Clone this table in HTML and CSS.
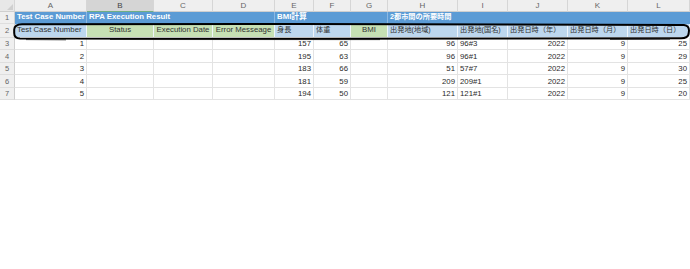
FILE: index.html
```html
<!DOCTYPE html>
<html lang="ja">
<head>
<meta charset="utf-8">
<title>Sheet</title>
<link rel="stylesheet" href="styles.css">
</head>
<body>
<div class="wrap">
  <div class="sheet">
    <!-- column headers -->
    <div class="ch corner"><span class="tri"></span></div>
    <div class="ch">A</div>
    <div class="ch sel">B</div>
    <div class="ch">C</div>
    <div class="ch">D</div>
    <div class="ch">E</div>
    <div class="ch">F</div>
    <div class="ch">G</div>
    <div class="ch">H</div>
    <div class="ch">I</div>
    <div class="ch">J</div>
    <div class="ch">K</div>
    <div class="ch">L</div>

    <!-- row 1 -->
    <div class="rh">1</div>
    <div class="c h1 sepr">Test Case Number</div>
    <div class="c h1 span3 sepr">RPA Execution Result</div>
    <div class="c h1 span3 sepr">BMI計算</div>
    <div class="c h1 span5 jp">2都市間の所要時間</div>

    <!-- row 2 -->
    <div class="rh">2</div>
    <div class="c h2 blue">Test Case Number</div>
    <div class="c h2 green ctr">Status</div>
    <div class="c h2 green ctr">Execution Date</div>
    <div class="c h2 green ctr">Error Messeage</div>
    <div class="c h2 blue jp">身長</div>
    <div class="c h2 blue jp">体重</div>
    <div class="c h2 green ctr">BMI</div>
    <div class="c h2 blue jp">出発地(地域)</div>
    <div class="c h2 blue jp">出発地(国名)</div>
    <div class="c h2 blue jp">出発日時（年）</div>
    <div class="c h2 blue jp">出発日時（月）</div>
    <div class="c h2 blue jp">出発日時（日）</div>

    <!-- row 3 -->
    <div class="rh">3</div>
    <div class="c num">1</div><div class="c"></div><div class="c"></div><div class="c"></div>
    <div class="c num">157</div><div class="c num">65</div><div class="c"></div>
    <div class="c num">96</div><div class="c">96#3</div>
    <div class="c num">2022</div><div class="c num">9</div><div class="c num">25</div>

    <!-- row 4 -->
    <div class="rh">4</div>
    <div class="c num">2</div><div class="c"></div><div class="c"></div><div class="c"></div>
    <div class="c num">195</div><div class="c num">63</div><div class="c"></div>
    <div class="c num">96</div><div class="c">96#1</div>
    <div class="c num">2022</div><div class="c num">9</div><div class="c num">29</div>

    <!-- row 5 -->
    <div class="rh">5</div>
    <div class="c num">3</div><div class="c"></div><div class="c"></div><div class="c"></div>
    <div class="c num">183</div><div class="c num">66</div><div class="c"></div>
    <div class="c num">51</div><div class="c">57#7</div>
    <div class="c num">2022</div><div class="c num">9</div><div class="c num">30</div>

    <!-- row 6 -->
    <div class="rh">6</div>
    <div class="c num">4</div><div class="c"></div><div class="c"></div><div class="c"></div>
    <div class="c num">181</div><div class="c num">59</div><div class="c"></div>
    <div class="c num">209</div><div class="c">209#1</div>
    <div class="c num">2022</div><div class="c num">9</div><div class="c num">25</div>

    <!-- row 7 -->
    <div class="rh">7</div>
    <div class="c num">5</div><div class="c"></div><div class="c"></div><div class="c"></div>
    <div class="c num">194</div><div class="c num">50</div><div class="c"></div>
    <div class="c num">121</div><div class="c">121#1</div>
    <div class="c num">2022</div><div class="c num">9</div><div class="c num">20</div>
  </div>

  <svg class="mark" width="690" height="50" viewBox="0 0 690 50" aria-hidden="true">
    <path d="M22,24.2 L300,24 L684,25 Q689,25.5 689,30.5 L688.6,34 Q688,38.2 681,38.2 L300,38.8 L20,38.6 Q14.2,38.4 14.2,33 L14.2,29.5 Q14.4,24.4 22,24.2 Z" fill="none" stroke="#000" stroke-width="2"/>
    <path d="M26,39.6 L66,39.8" fill="none" stroke="#333" stroke-width="1"/>
    <path d="M110,39.5 L380,39.6" fill="none" stroke="#222" stroke-width="1"/>
    <path d="M610,39.4 L670,39.2" fill="none" stroke="#333" stroke-width="1"/>
  </svg>
</div>
</body>
</html>
```

FILE: styles.css
```css
html, body {
  margin: 0;
  padding: 0;
  background: #ffffff;
}

.wrap {
  position: relative;
  width: 690px;
  height: 269px;
  overflow: hidden;
}

.sheet {
  display: grid;
  grid-template-columns: 15px 72px 67px 59px 62px 39px 37px 37px 70px 50px 60px 60px 62px;
  grid-template-rows: 12px 12px 14px 12px 13px 12px 13px 12px;
  font-family: "Liberation Sans", "Noto Sans CJK JP", sans-serif;
  font-size: 7.8px;
  color: #2b2b2b;
}

.ch {
  box-sizing: border-box;
  background: #efefef;
  color: #666666;
  font-size: 8px;
  display: flex;
  align-items: center;
  justify-content: center;
  border-right: 1px solid #d6d6d6;
  border-bottom: 1px solid #cfcfcf;
}

.ch.sel {
  background: #d5d5d5;
  color: #444444;
  border-bottom: 1px solid #6fae84;
}

.corner {
  position: relative;
  background: #e8e8e8;
}

.tri {
  position: absolute;
  right: 1px;
  bottom: 1px;
  width: 0;
  height: 0;
  border-left: 6px solid transparent;
  border-bottom: 6px solid #cfcfcf;
}

.rh {
  box-sizing: border-box;
  background: #efefef;
  color: #666666;
  font-size: 7.5px;
  display: flex;
  align-items: center;
  justify-content: center;
  border-right: 1px solid #cfcfcf;
  border-bottom: 1px solid #dedede;
}

.c {
  box-sizing: border-box;
  border-right: 1px solid #e3e3e3;
  border-bottom: 1px solid #e3e3e3;
  padding: 0 2px;
  white-space: nowrap;
  overflow: hidden;
  display: flex;
  align-items: flex-end;
  padding-bottom: 1px;
  line-height: 1;
}

.num {
  justify-content: flex-end;
}

.ctr {
  justify-content: center;
}

.jp {
  font-size: 7.2px;
}

.h1 {
  background: #5b9bd5;
  color: #ffffff;
  font-weight: bold;
  border-right: 1px solid #5b9bd5;
  border-bottom: 1px solid #5b9bd5;
  align-items: center;
}

.h1.sepr {
  border-right: 1px solid #8cb8e2;
}

.span3 {
  grid-column: span 3;
}

.span5 {
  grid-column: span 5;
}

.h2 {
  align-items: center;
  color: #333333;
  border-right: 1px solid #eef4fa;
  border-bottom: 1px solid #ffffff;
}

.blue {
  background: #bdd7ee;
}

.green {
  background: #c6e0b4;
}

.mark {
  position: absolute;
  left: 0;
  top: 0;
  pointer-events: none;
}
```
